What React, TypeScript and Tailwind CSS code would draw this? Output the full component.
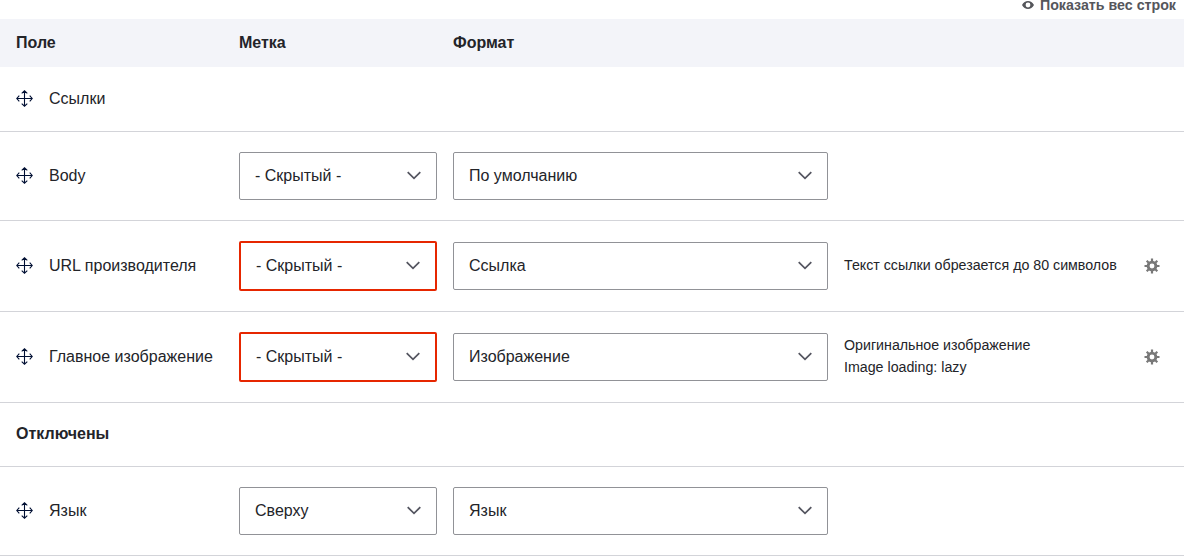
import type { ReactNode } from 'react';

function MoveIcon() {
  return (
    <svg className="-mt-px h-[17px] w-[17px] shrink-0" viewBox="0 0 17 17" fill="none" stroke="#000f33" strokeWidth="1.1">
      <path d="M8.500 .8v15.400M.8 8.500h15.400M5.700 3.300l2.800-2.500 2.800 2.500M5.700 13.700l2.800 2.500 2.800-2.500M3.300 5.700L.8 8.500l2.500 2.800M13.700 5.700l2.500 2.800-2.500 2.800" />
    </svg>
  );
}

function GearIcon() {
  return (
    <svg className="h-4 w-4" viewBox="0 0 16 16" fill="none" stroke="#787878">
      <circle cx="8" cy="8" r="3.9" strokeWidth="2.900" />
      <path
        strokeWidth="2.200"
        d="M8 .5v2.700M8 12.800v2.700M.5 8h2.700M12.800 8h2.700M2.700 2.700l2 2M11.300 11.300l2 2M13.300 2.700l-2 2M4.700 11.300l-2 2"
      />
    </svg>
  );
}

function EyeIcon() {
  return (
    <svg className="h-[10px] w-3" viewBox="0 0 12 10" fill="#55565b">
      <path fillRule="evenodd" d="M0 5C1.400 2.500 3.500 1 6 1s4.600 1.500 6 4c-1.400 2.500-3.500 4-6 4S1.400 7.500 0 5zM6 2.600a2.400 2.400 0 1 0 0 4.800 2.400 2.400 0 0 0 0-4.800z" />
    </svg>
  );
}

function Select({ value, error = false }: { value: string; error?: boolean }) {
  return (
    <button
      className={`flex w-full items-center justify-between rounded-[2px] bg-white px-[15px] text-left leading-6 ${
        error ? 'h-[50px] border-2 border-[#e62600]' : 'h-12 border border-[#919297]'
      }`}
    >
      <span>{value}</span>
      <svg className="mb-px h-[9px] w-[14px]" viewBox="0 0 14 9" fill="none" stroke="#545560" strokeWidth="1.75">
        <path d="M.7 1.200L7 7.300l6.300-6.100" />
      </svg>
    </button>
  );
}

function Row({
  name,
  label,
  format,
  error,
  summary,
  height,
}: {
  name: string;
  label?: string;
  format?: string;
  error?: boolean;
  summary?: ReactNode;
  height: string;
}) {
  return (
    <div className={`grid grid-cols-[207px_198px_375px_284px_1fr] items-center gap-x-4 border-b border-[#d3d4d9] pl-4 ${height}`}>
      <div className="flex items-center gap-4 whitespace-nowrap">
        <MoveIcon />
        <span>{name}</span>
      </div>
      <div>{label && <Select value={label} error={error} />}</div>
      <div>{format && <Select value={format} />}</div>
      <div className="whitespace-nowrap pb-0.5 text-[14.220px] leading-[22px]">{summary}</div>
      <div>{summary && <GearIcon />}</div>
    </div>
  );
}

export default function App() {
  return (
    <main className="h-[556px] w-[1184px] overflow-hidden bg-white font-['Liberation_Sans',sans-serif] text-base text-[#232429]">
      <div className="flex h-[19px] items-start justify-end pr-2">
        <button className="-mt-1 flex h-[18px] items-center gap-1.5 text-[14.220px] leading-5 font-bold text-[#55565b]">
          <EyeIcon />
          <span>Показать вес строк</span>
        </button>
      </div>
      <div className="grid h-12 grid-cols-[207px_198px_1fr] items-center gap-x-4 bg-[#f3f4f9] pl-4 font-bold">
        <span>Поле</span>
        <span>Метка</span>
        <span>Формат</span>
      </div>
      <Row name="Ссылки" height="h-[65px]" />
      <Row name="Body" label="- Скрытый -" format="По умолчанию" height="h-[89px]" />
      <Row
        name="URL производителя"
        label="- Скрытый -"
        format="Ссылка"
        error
        summary="Текст ссылки обрезается до 80 символов"
        height="h-[91px]"
      />
      <Row
        name="Главное изображение"
        label="- Скрытый -"
        format="Изображение"
        error
        summary={
          <>
            Оригинальное изображение
            <br />
            Image loading: lazy
          </>
        }
        height="h-[91px]"
      />
      <div className="flex h-16 items-center border-b border-[#d3d4d9] pb-px pl-4 font-bold">Отключены</div>
      <Row name="Язык" label="Сверху" format="Язык" height="h-[89px]" />
    </main>
  );
}
